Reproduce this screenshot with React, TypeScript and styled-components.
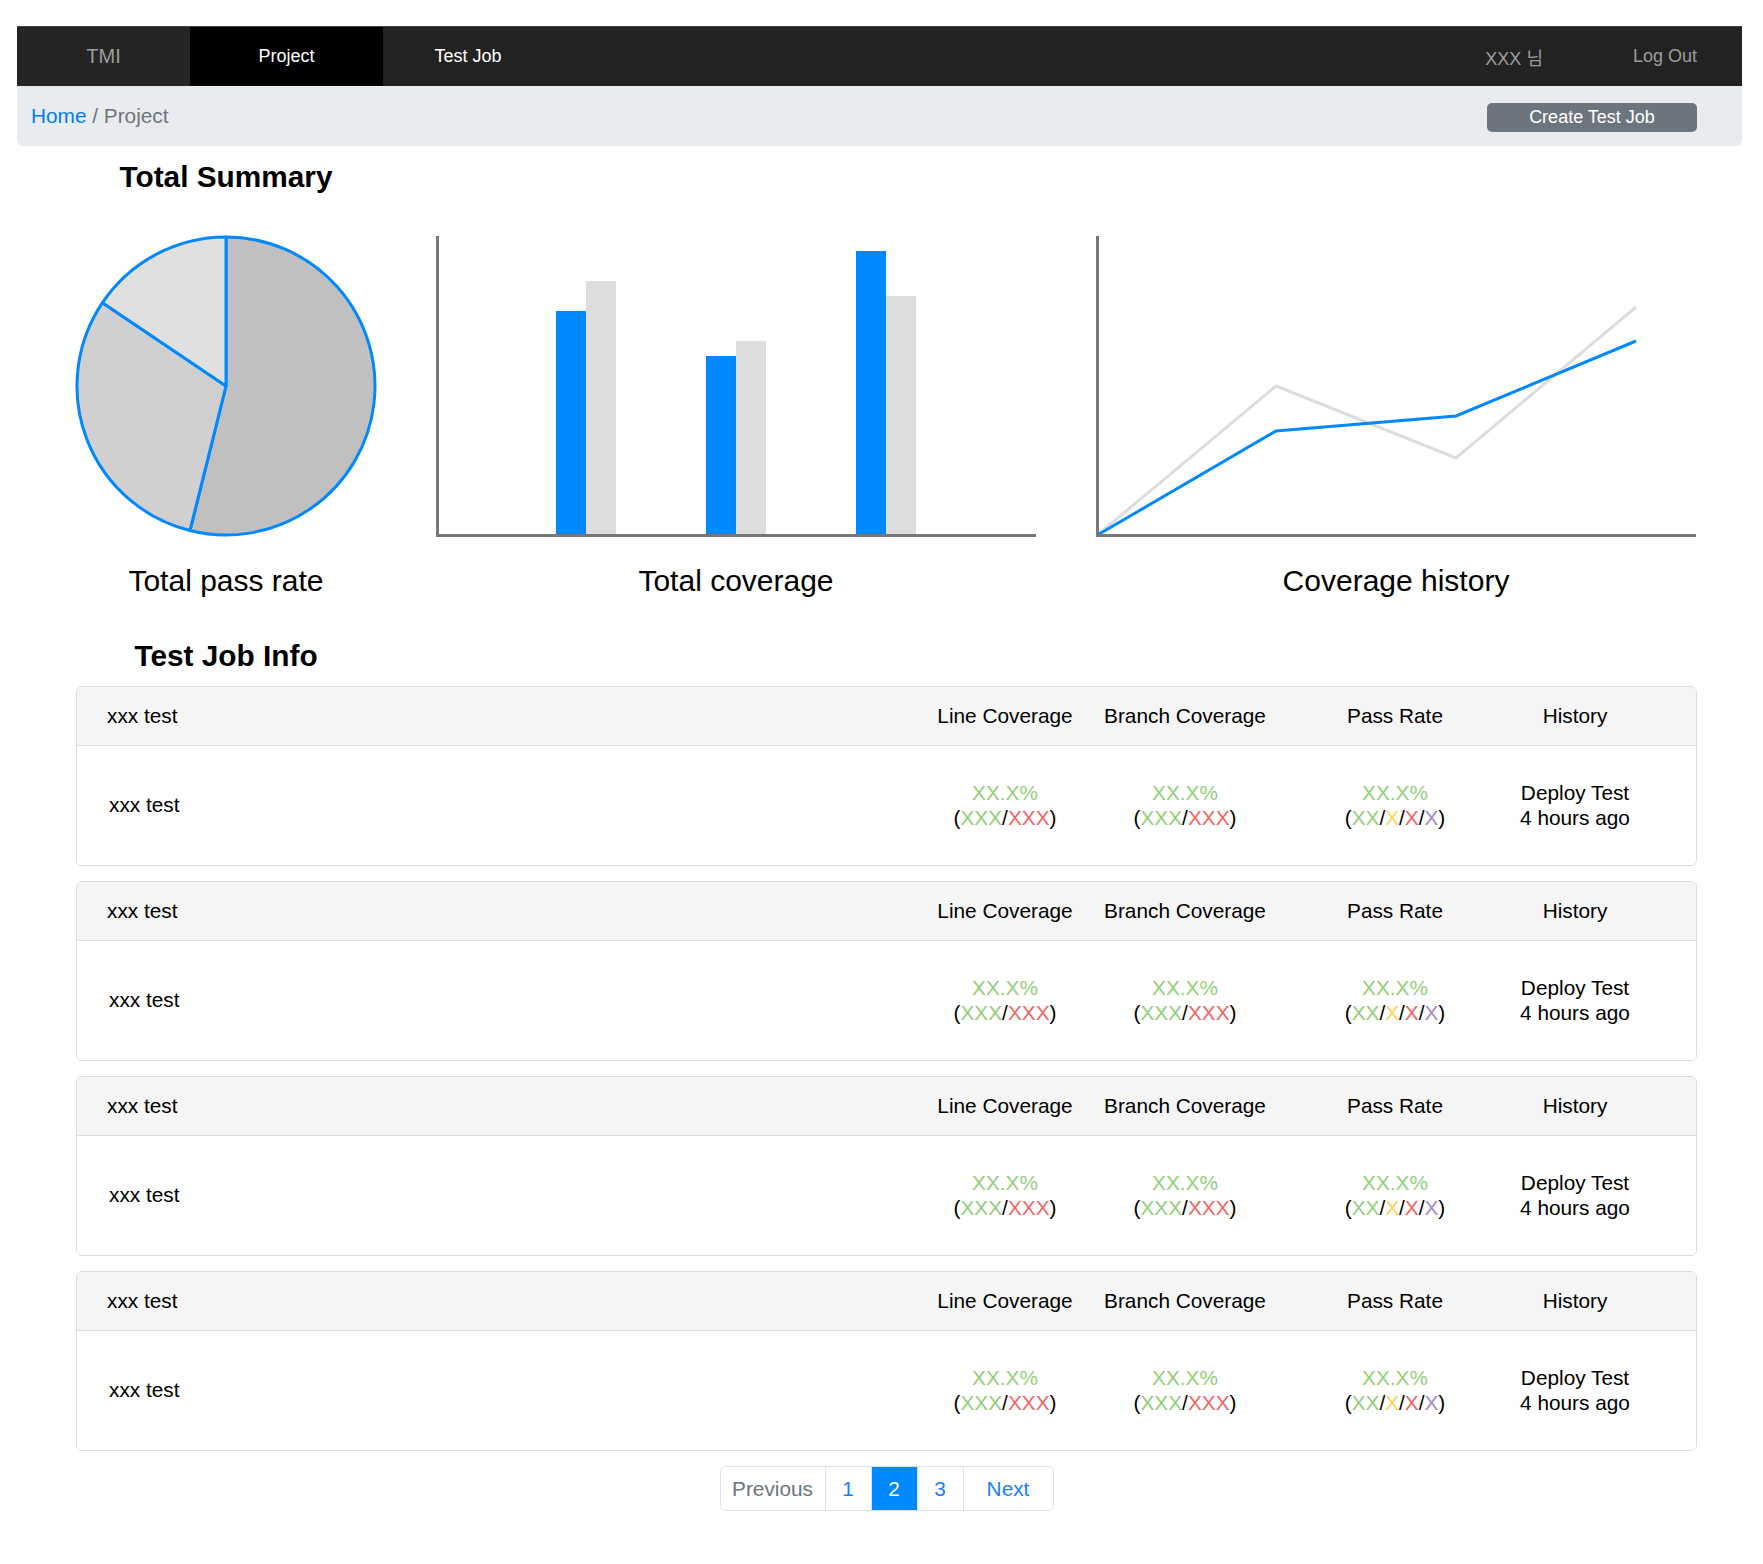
import React from 'react';
import styled, { createGlobalStyle } from 'styled-components';

const GlobalStyle = createGlobalStyle`
body {
    margin: 0;
    background: #fff;
    font-family: "Liberation Sans", Arial, "Noto Sans CJK KR", sans-serif;
    color: #000;
}
`
const Page = styled.div`
padding: 26px 21px 40px 17px;
`
const NavBar = styled.nav`
display: flex;
align-items: stretch;
height: 60px;
background-color: #222;
border-top: 1px solid #444;
box-sizing: border-box;
`
const Brand = styled.div`
display: flex;
align-items: center;
justify-content: center;
width: 173px;
background-color: #252525;
color: #9d9d9d;
font-size: 20px;
`
const NavItem = styled.div<{ $w?: number; $active?: boolean; $muted?: boolean }>`
display: flex;
align-items: center;
justify-content: center;
width: ${(p) => (p.$w ? `${p.$w}px` : 'auto')};
padding: ${(p) => (p.$w ? '0' : '0 45px')};
background-color: ${(p) => (p.$active ? '#000' : 'transparent')};
color: ${(p) => (p.$muted ? '#9d9d9d' : '#fff')};
font-size: 18px;
`
const NavRight = styled.div`
display: flex;
margin-left: auto;
`
const Crumbs = styled.div`
display: flex;
align-items: center;
justify-content: space-between;
height: 60px;
padding: 0 45px 0 14px;
background-color: #e9ecef;
border-radius: 0 0 6px 6px;
font-size: 20.8px;
color: #6c757d;
`
const HomeLink = styled.a`
color: #007bff;
text-decoration: none;
`
const DarkButton = styled.button`
width: 210px;
height: 29px;
margin-top: 2px;
border: none;
border-radius: 5px;
background-color: #6c757d;
color: #fff;
font-family: inherit;
font-size: 18px;
`
const Content = styled.main`
padding: 0 45px 0 59px;
`
const SectionTitle = styled.h2<{ $top: number; $bottom: number }>`
width: 300px;
margin: ${(p) => p.$top}px 0 ${(p) => p.$bottom}px;
text-align: center;
font-size: 29.8px;
line-height: 33px;
font-weight: 700;
`
const ChartRow = styled.div`
display: flex;
gap: 60px;
`
const ChartBox = styled.figure<{ $w: number }>`
display: flex;
flex-direction: column;
align-items: center;
width: ${(p) => p.$w}px;
margin: 0;
`
const ChartCaption = styled.figcaption`
margin-top: 27px;
font-size: 30px;
line-height: 33px;
`
const Card = styled.section`
margin-bottom: 15px;
border: 1px solid #ddd;
border-radius: 6px;
overflow: hidden;
`
const Row = styled.div<{ $head?: boolean }>`
display: grid;
grid-template-columns: 1fr 160px 200px 220px 140px;
align-items: center;
height: ${(p) => (p.$head ? '58px' : '119px')};
padding: 0 51px 0 ${(p) => (p.$head ? '30px' : '32px')};
background-color: ${(p) => (p.$head ? '#f5f5f5' : '#fff')};
border-bottom: ${(p) => (p.$head ? '1px solid #ddd' : 'none')};
font-size: 20.8px;
line-height: 24.5px;
`
const Cell = styled.div<{ $left?: boolean }>`
text-align: ${(p) => (p.$left ? 'left' : 'center')};
white-space: nowrap;
`
const Tone = styled.span<{ $c: string }>`
color: ${(p) => p.$c};
`
const Pager = styled.nav`
display: flex;
justify-content: center;
`
const PageList = styled.ul`
display: flex;
margin: 0;
padding: 0;
list-style: none;
border: 1px solid #dee2e6;
border-radius: 6px;
overflow: hidden;
`
const PageItem = styled.li<{ $w: number; $active?: boolean; $disabled?: boolean }>`
display: flex;
align-items: center;
justify-content: center;
width: ${(p) => p.$w}px;
height: 43px;
border-left: 1px solid #dee2e6;
background-color: ${(p) => (p.$active ? '#0088ff' : '#fff')};
color: ${(p) => (p.$active ? '#fff' : p.$disabled ? '#6c757d' : '#1a7fff')};
font-size: 20.8px;

&:first-child {
    border-left: none;
}
`

const GREEN = '#93cf7c'
const RED = '#f06666'
const YELLOW = '#ffd35a'
const PURPLE = '#a48bc9'

function PieChart() {
    const cx = 150
    const cy = 150
    const r = 149
    const slices = [
        { from: 0, to: 194, fill: '#c0c0c0' },
        { from: 194, to: 304, fill: '#d0d0d0' },
        { from: 304, to: 360, fill: '#e0e0e0' },
    ]
    const pt = (deg: number) => {
        const a = (deg * Math.PI) / 180
        return [cx + r * Math.sin(a), cy - r * Math.cos(a)]
    }
    return (
        <svg width="300" height="301" style={{ overflow: 'visible' }}>
            {slices.map((s) => {
                const [x1, y1] = pt(s.from)
                const [x2, y2] = pt(s.to)
                const large = s.to - s.from > 180 ? 1 : 0
                return (
                    <path
                        key={s.from}
                        d={`M${cx} ${cy} L${x1} ${y1} A${r} ${r} 0 ${large} 1 ${x2} ${y2} Z`}
                        fill={s.fill}
                        stroke="#0088ff"
                        strokeWidth="3"
                        strokeLinejoin="round"
                    />
                )
            })}
        </svg>
    )
}

function BarChart() {
    const groups = [
        { x: 120, blue: 75, gray: 45 },
        { x: 270, blue: 120, gray: 105 },
        { x: 420, blue: 15, gray: 60 },
    ]
    return (
        <svg width="600" height="301">
            {groups.map((g) => (
                <g key={g.x}>
                    <rect x={g.x} y={g.blue} width="30" height={298 - g.blue} fill="#0088ff" />
                    <rect x={g.x + 30} y={g.gray} width="30" height={298 - g.gray} fill="#dddddd" />
                </g>
            ))}
            <polyline points="1.5,0 1.5,299.5 600,299.5" fill="none" stroke="#777" strokeWidth="3" />
        </svg>
    )
}

function LineChart() {
    return (
        <svg width="600" height="301">
            <polyline points="1.5,299 180,150 360,222 540,71" fill="none" stroke="#dddddd" strokeWidth="3" />
            <polyline points="1.5,299 180,195 360,180 540,105" fill="none" stroke="#0088ff" strokeWidth="3" />
            <polyline points="1.5,0 1.5,299.5 600,299.5" fill="none" stroke="#777" strokeWidth="3" />
        </svg>
    )
}

function JobCard({ name }: { name: string }) {
    return (
        <Card>
            <Row $head>
                <Cell $left>{name}</Cell>
                <Cell>Line Coverage</Cell>
                <Cell>Branch Coverage</Cell>
                <Cell>Pass Rate</Cell>
                <Cell>History</Cell>
            </Row>
            <Row>
                <Cell $left>{name}</Cell>
                <Cell>
                    <Tone $c={GREEN}>XX.X%</Tone>
                    <br />(<Tone $c={GREEN}>XXX</Tone>/<Tone $c={RED}>XXX</Tone>)
                </Cell>
                <Cell>
                    <Tone $c={GREEN}>XX.X%</Tone>
                    <br />(<Tone $c={GREEN}>XXX</Tone>/<Tone $c={RED}>XXX</Tone>)
                </Cell>
                <Cell>
                    <Tone $c={GREEN}>XX.X%</Tone>
                    <br />(<Tone $c={GREEN}>XX</Tone>/<Tone $c={YELLOW}>X</Tone>/<Tone $c={RED}>X</Tone>/<Tone $c={PURPLE}>X</Tone>)
                </Cell>
                <Cell>
                    Deploy Test
                    <br />4 hours ago
                </Cell>
            </Row>
        </Card>
    )
}

export default function App() {
    const jobs = ['xxx test', 'xxx test', 'xxx test', 'xxx test']
    return (
        <Page>
            <GlobalStyle />
            <NavBar>
                <Brand>TMI</Brand>
                <NavItem $w={193} $active>Project</NavItem>
                <NavItem $w={170}>Test Job</NavItem>
                <NavRight>
                    <NavItem $muted>XXX 님</NavItem>
                    <NavItem $muted>Log Out</NavItem>
                </NavRight>
            </NavBar>
            <Crumbs>
                <span>
                    <HomeLink href="#">Home</HomeLink> / Project
                </span>
                <DarkButton>Create Test Job</DarkButton>
            </Crumbs>
            <Content>
                <SectionTitle $top={14} $bottom={43}>Total Summary</SectionTitle>
                <ChartRow>
                    <ChartBox $w={300}>
                        <PieChart />
                        <ChartCaption>Total pass rate</ChartCaption>
                    </ChartBox>
                    <ChartBox $w={600}>
                        <BarChart />
                        <ChartCaption>Total coverage</ChartCaption>
                    </ChartBox>
                    <ChartBox $w={600}>
                        <LineChart />
                        <ChartCaption>Coverage history</ChartCaption>
                    </ChartBox>
                </ChartRow>
                <SectionTitle $top={42} $bottom={14}>Test Job Info</SectionTitle>
                {jobs.map((j, i) => (
                    <JobCard key={i} name={j} />
                ))}
                <Pager>
                    <PageList>
                        <PageItem $w={104} $disabled>Previous</PageItem>
                        <PageItem $w={45}>1</PageItem>
                        <PageItem $w={45} $active>2</PageItem>
                        <PageItem $w={45}>3</PageItem>
                        <PageItem $w={89}>Next</PageItem>
                    </PageList>
                </Pager>
            </Content>
        </Page>
    )
}
